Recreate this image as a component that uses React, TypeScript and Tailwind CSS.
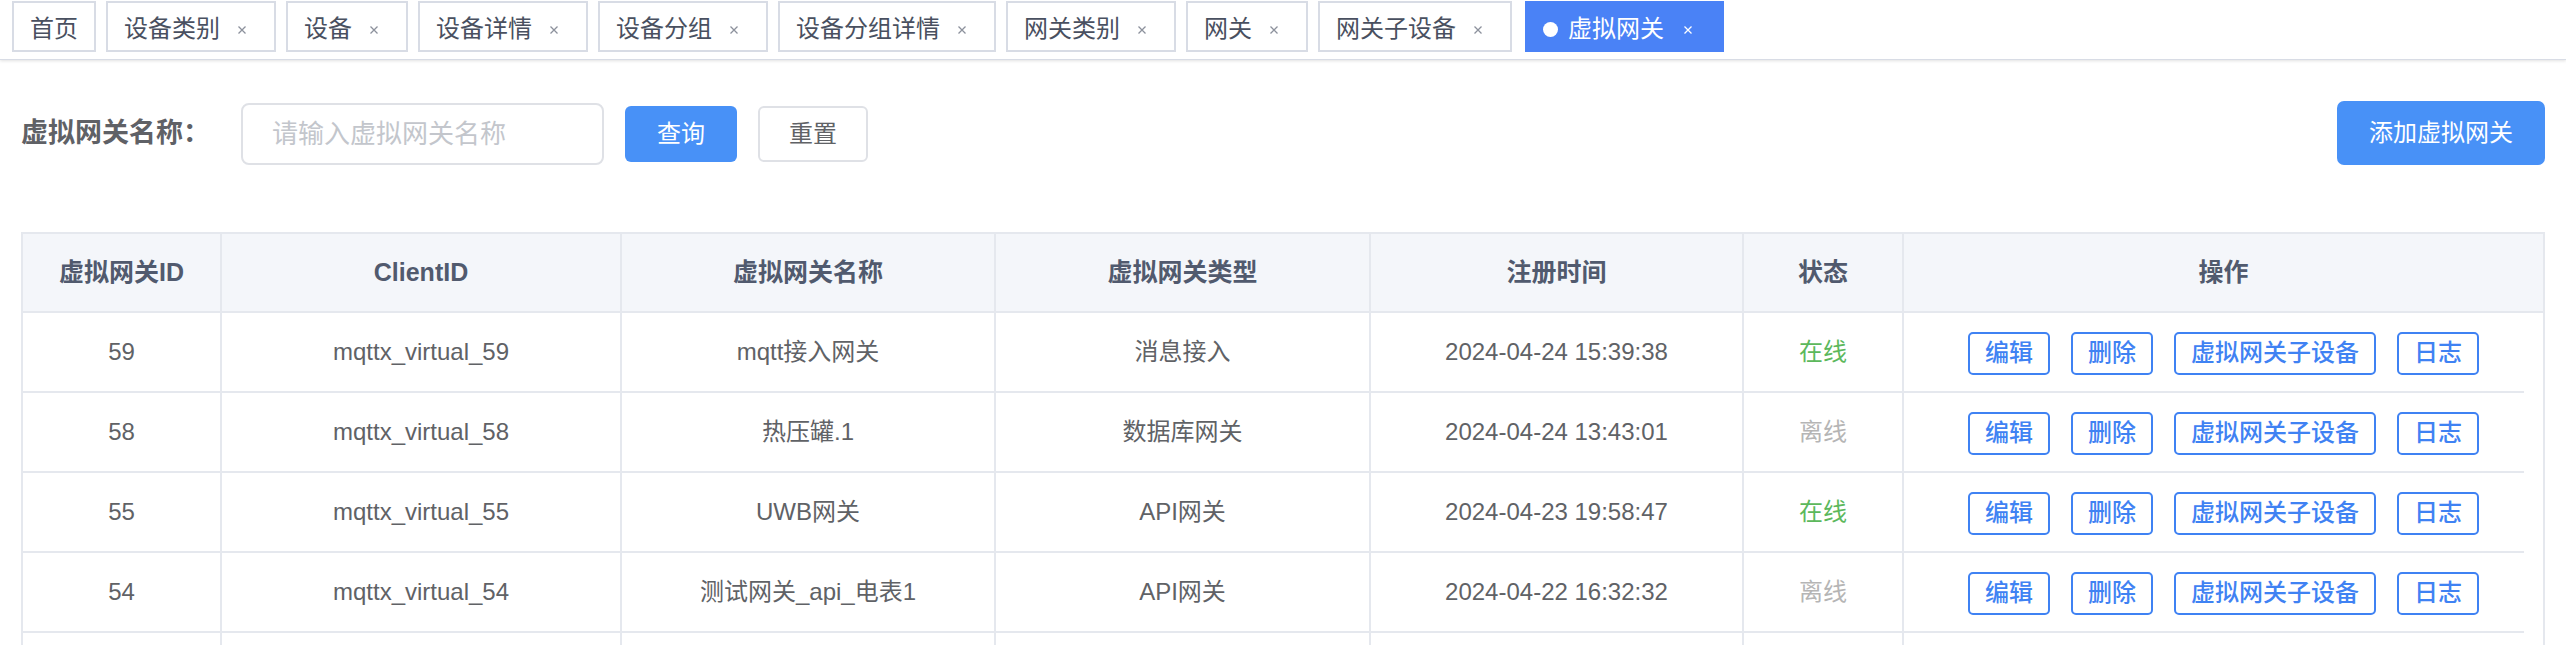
import { Fragment } from 'react'

const tabs = [
  { label: '首页', closable: false },
  { label: '设备类别', closable: true },
  { label: '设备', closable: true },
  { label: '设备详情', closable: true },
  { label: '设备分组', closable: true },
  { label: '设备分组详情', closable: true },
  { label: '网关类别', closable: true },
  { label: '网关', closable: true },
  { label: '网关子设备', closable: true },
]

const columns = ['虚拟网关ID', 'ClientID', '虚拟网关名称', '虚拟网关类型', '注册时间', '状态', '操作']

const rows = [
  { id: '59', client: 'mqttx_virtual_59', name: 'mqtt接入网关', type: '消息接入', time: '2024-04-24 15:39:38', online: true },
  { id: '58', client: 'mqttx_virtual_58', name: '热压罐.1', type: '数据库网关', time: '2024-04-24 13:43:01', online: false },
  { id: '55', client: 'mqttx_virtual_55', name: 'UWB网关', type: 'API网关', time: '2024-04-23 19:58:47', online: true },
  { id: '54', client: 'mqttx_virtual_54', name: '测试网关_api_电表1', type: 'API网关', time: '2024-04-22 16:32:32', online: false },
]

function CloseX({ color }: { color: string }) {
  return (
    <svg width="10" height="10" viewBox="0 0 10 10" className="block">
      <path d="M1.5 1.5 L8.5 8.5 M8.5 1.5 L1.5 8.5" stroke={color} strokeWidth="1.3" fill="none" />
    </svg>
  )
}

const cell = 'flex items-center justify-center border-r-2 border-b-2 border-[#e5e8ee]'

export default function App() {
  return (
    <div className="min-h-screen bg-white font-['Liberation_Sans','Noto_Sans_CJK_SC',sans-serif]">
      {/* tags view */}
      <div className="h-[60px] border-b border-[#d8dce5] shadow-[0_1px_3px_rgba(0,0,0,0.12)] flex items-start gap-[10px] pl-[12px] pt-[1px]">
        {tabs.map((t) => (
          <div
            key={t.label}
            className="h-[51px] border-2 border-[#d8dce5] bg-white text-[#495060] text-[24px] flex items-center pt-[5px] pl-[16px] pr-[16px]"
          >
            <span>{t.label}</span>
            {t.closable && (
              <span className="ml-[10px] w-[24px] flex justify-center mr-[4px] pt-[2px]">
                <CloseX color="#8c919c" />
              </span>
            )}
          </div>
        ))}
        <div className="ml-[3px] h-[51px] border-2 border-[#4a82f6] bg-[#4a82f6] text-white text-[24px] flex items-center pt-[5px] pl-[16px] pr-[22px]">
          <span className="w-[15px] h-[15px] rounded-full bg-white mr-[10px]" />
          <span>虚拟网关</span>
          <span className="ml-[12px] w-[24px] flex justify-center pt-[2px]">
            <CloseX color="#ffffff" />
          </span>
        </div>
      </div>

      <main className="px-[21px] pt-[41px]">
        {/* search */}
        <div className="flex items-center justify-between h-[64px]">
          <div className="flex items-center">
            <label className="w-[220px] shrink-0 text-[27px] font-bold text-[#5f6166]">虚拟网关名称：</label>
            <div className="w-[363px] h-[62px] border-2 border-[#dfe1e6] rounded-[8px] flex items-center pl-[29px] text-[26px] text-[#c3c6cc] mt-[2px]">
              请输入虚拟网关名称
            </div>
            <button className="ml-[21px] w-[112px] h-[56px] rounded-[6px] bg-[#4891f7] text-white text-[24px] mt-[2px]">查询</button>
            <button className="ml-[21px] w-[110px] h-[56px] rounded-[6px] border-2 border-[#dfe1e6] bg-white text-[#606266] text-[24px] mt-[2px]">重置</button>
          </div>
          <button className="w-[208px] h-[64px] rounded-[7px] bg-[#4891f7] text-white text-[24px]">添加虚拟网关</button>
        </div>

        {/* table */}
        <div className="mt-[67px] border-l-2 border-t-2 border-[#e5e8ee] grid grid-cols-[199px_400px_374px_375px_373px_160px_1fr]">
          {columns.map((c) => (
            <div key={c} className={`${cell} h-[79px] bg-[#f4f6fa] text-[25px] font-bold text-[#515a6e]`}>
              {c}
            </div>
          ))}
          {rows.map((r) => (
            <Fragment key={r.id}>
              <div className={`${cell} h-[80px] text-[24px] text-[#606266]`}>{r.id}</div>
              <div className={`${cell} h-[80px] text-[24px] text-[#606266]`}>{r.client}</div>
              <div className={`${cell} h-[80px] text-[24px] text-[#606266]`}>{r.name}</div>
              <div className={`${cell} h-[80px] text-[24px] text-[#606266]`}>{r.type}</div>
              <div className={`${cell} h-[80px] text-[24px] text-[#606266]`}>{r.time}</div>
              <div className={`${cell} h-[80px] text-[24px] ${r.online ? 'text-[#5cb85c]' : 'text-[#b5b5b5]'}`}>
                {r.online ? '在线' : '离线'}
              </div>
              <div className="h-[80px] border-r-2 border-[#e5e8ee] flex items-center justify-center gap-[21px] bg-[linear-gradient(#e5e8ee,#e5e8ee)] bg-no-repeat bg-[length:calc(100%-19px)_2px] bg-[position:left_bottom]">
                {['编辑', '删除', '虚拟网关子设备', '日志'].map((b) => (
                  <button
                    key={b}
                    className="h-[43px] px-[15px] border-2 border-[#3f82f3] rounded-[5px] bg-white text-[#3f82f3] text-[24px] font-medium"
                  >
                    {b}
                  </button>
                ))}
              </div>
            </Fragment>
          ))}
          {/* next row, below the fold */}
          {columns.map((c) => (
            <div key={`next-${c}`} className={`${cell} h-[80px]`} />
          ))}
        </div>
      </main>
    </div>
  )
}
